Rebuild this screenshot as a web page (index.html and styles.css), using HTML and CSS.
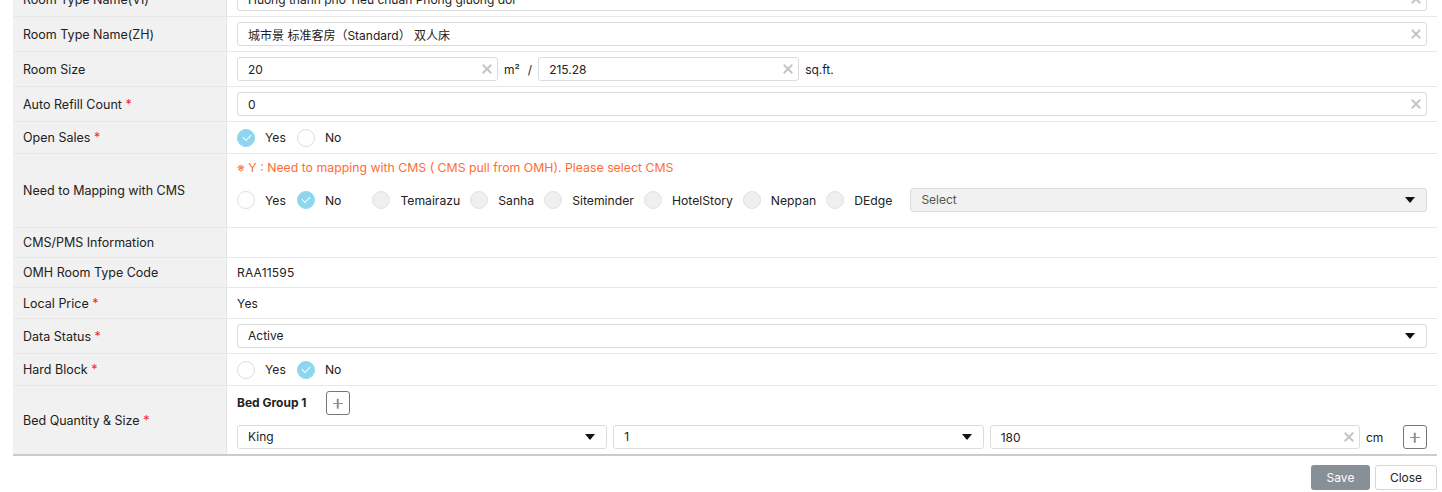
FILE: index.html
```html
<!DOCTYPE html>
<html lang="en">
<head>
    <meta charset="UTF-8">
    <title>Room Type Edit</title>
    <link rel="stylesheet" href="styles.css">
</head>
<body>
    <div class="form">
        <div class="row">
            <div class="label">Room Type Name(VI)</div>
            <div class="value">
                <div class="field"><input type="text" value="Hướng thành phố Tiêu chuẩn Phòng giường đôi"><span class="clear"></span></div>
            </div>
        </div>
        <div class="row">
            <div class="label">Room Type Name(ZH)</div>
            <div class="value">
                <div class="field"><input type="text" value="城市景 标准客房（Standard） 双人床"><span class="clear"></span></div>
            </div>
        </div>
        <div class="row">
            <div class="label">Room Size</div>
            <div class="value">
                <div class="field field-size"><input type="text" value="20"><span class="clear"></span></div>
                <span class="unit">m²</span>
                <span class="slash">/</span>
                <div class="field field-size"><input type="text" value="215.28"><span class="clear"></span></div>
                <span class="unit">sq.ft.</span>
            </div>
        </div>
        <div class="row">
            <div class="label">Auto Refill Count&nbsp;<span class="req">*</span></div>
            <div class="value">
                <div class="field"><input type="text" value="0"><span class="clear"></span></div>
            </div>
        </div>
        <div class="row row-radio">
            <div class="label">Open Sales&nbsp;<span class="req">*</span></div>
            <div class="value">
                <label class="radio-item"><span class="radio checked"></span>Yes</label>
                <label class="radio-item"><span class="radio"></span>No</label>
            </div>
        </div>
        <div class="row row-cms">
            <div class="label">Need to Mapping with CMS</div>
            <div class="value value-cms">
                <div class="note">※ Y : Need to mapping with CMS ( CMS pull from OMH). Please select CMS</div>
                <div class="cms-line">
                    <label class="radio-item"><span class="radio"></span>Yes</label>
                    <label class="radio-item"><span class="radio checked"></span>No</label>
                    <div class="cms-list">
                        <label class="radio-item"><span class="radio disabled"></span>Temairazu</label>
                        <label class="radio-item"><span class="radio disabled"></span>Sanha</label>
                        <label class="radio-item"><span class="radio disabled"></span>Siteminder</label>
                        <label class="radio-item"><span class="radio disabled"></span>HotelStory</label>
                        <label class="radio-item"><span class="radio disabled"></span>Neppan</label>
                        <label class="radio-item"><span class="radio disabled"></span>DEdge</label>
                    </div>
                    <div class="select select-disabled">Select<span class="arrow"></span></div>
                </div>
            </div>
        </div>
        <div class="row row-text">
            <div class="label">CMS/PMS Information</div>
            <div class="value"></div>
        </div>
        <div class="row row-text">
            <div class="label">OMH Room Type Code</div>
            <div class="value plain">RAA11595</div>
        </div>
        <div class="row row-text row-price">
            <div class="label">Local Price&nbsp;<span class="req">*</span></div>
            <div class="value plain">Yes</div>
        </div>
        <div class="row">
            <div class="label">Data Status&nbsp;<span class="req">*</span></div>
            <div class="value">
                <div class="select">Active<span class="arrow"></span></div>
            </div>
        </div>
        <div class="row row-radio">
            <div class="label">Hard Block&nbsp;<span class="req">*</span></div>
            <div class="value">
                <label class="radio-item"><span class="radio"></span>Yes</label>
                <label class="radio-item"><span class="radio checked"></span>No</label>
            </div>
        </div>
        <div class="row">
            <div class="label">Bed Quantity &amp; Size&nbsp;<span class="req">*</span></div>
            <div class="value value-bed">
                <div class="bed-head">
                    <span class="bed-title">Bed Group 1</span>
                    <button class="btn-plus"></button>
                </div>
                <div class="bed-line">
                    <div class="select">King<span class="arrow"></span></div>
                    <div class="select">1<span class="arrow"></span></div>
                    <div class="field"><input type="text" value="180"><span class="clear"></span></div>
                    <span class="unit">cm</span>
                    <button class="btn-plus"></button>
                </div>
            </div>
        </div>
    </div>

    <div class="footer">
        <button class="btn btn-save">Save</button>
        <button class="btn btn-close">Close</button>
    </div>
</body>
</html>
```

FILE: styles.css
```css
body {
    margin: 0;
    font-family: Inter, "Noto Sans", "Noto Sans CJK SC", sans-serif;
    color: #222;
    background: #fff;
}
.form {
    margin: -18px 5px 0 13px;
    border-bottom: 2px solid #cbcbcb;
}
.row {
    display: grid;
    grid-template-columns: 214px 1fr;
    height: 35px;
    box-sizing: border-box;
    border-bottom: 1px solid #e7e7e7;
}
.row:last-child {
    height: 68px;
    border-bottom: none;
}
.row-radio {
    height: 32px;
}
.row-cms {
    height: 74px;
}
.row-text {
    height: 30px;
}
.row-price {
    height: 31px;
}
.label {
    box-sizing: border-box;
    background: #f1f1f1;
    border-right: 1px solid #e4e4e4;
    padding: 0 10px;
    display: flex;
    align-items: center;
    font-size: 12.5px;
}
.req {
    color: #f0282d;
}
.value {
    display: flex;
    align-items: center;
    padding: 0 10px;
    min-width: 0;
}
.plain {
    font-size: 12px;
    letter-spacing: 0.2px;
}

/* text inputs */
.field {
    position: relative;
    flex: 1;
    height: 24px;
    min-width: 0;
}
.field input {
    box-sizing: border-box;
    width: 100%;
    height: 24px;
    border: 1px solid #dcdcdc;
    border-radius: 3px;
    padding: 0 28px 0 10px;
    font-family: inherit;
    font-size: 12px;
    color: #222;
    outline: none;
}
.clear {
    position: absolute;
    right: 6px;
    top: 7px;
    width: 10px;
    height: 10px;
}
.clear::before,
.clear::after {
    content: "";
    position: absolute;
    left: -1px;
    top: 4px;
    width: 12px;
    height: 2px;
    background: #c4c4c4;
    transform: rotate(45deg);
}
.clear::after {
    transform: rotate(-45deg);
}
.field-size {
    flex: none;
    width: 261px;
}
.unit {
    font-size: 12px;
    margin-left: 6px;
}
.slash {
    font-size: 12px;
    margin: 0 6px 0 8px;
}

/* selects */
.select {
    position: relative;
    flex: 1;
    box-sizing: border-box;
    height: 24px;
    border: 1px solid #dcdcdc;
    border-radius: 3px;
    padding: 0 10px;
    font-size: 12px;
    line-height: 22px;
    background: #fff;
}
.select-disabled {
    background: #f1f1f1;
    color: #555;
}
.arrow {
    position: absolute;
    right: 11px;
    top: 8px;
    border-left: 5px solid transparent;
    border-right: 5px solid transparent;
    border-top: 6px solid #111;
}

/* radios */
.radio-item {
    display: flex;
    align-items: center;
    font-size: 12.2px;
    margin-right: 11px;
}
.radio {
    box-sizing: border-box;
    width: 18px;
    height: 18px;
    border-radius: 50%;
    border: 1px solid #dedede;
    background: #fff;
    margin-right: 10px;
    position: relative;
}
.radio.checked {
    background: #8ed6ef;
    border-color: #8ed6ef;
}
.radio.checked::after {
    content: "";
    position: absolute;
    left: 4.5px;
    top: 4px;
    width: 7px;
    height: 4px;
    border-left: 1.5px solid #fff;
    border-bottom: 1.5px solid #fff;
    transform: rotate(-45deg);
}
.radio.disabled {
    background: #efefef;
    border-color: #e2e2e2;
}

/* cms row */
.value-cms {
    flex-direction: column;
    align-items: stretch;
    justify-content: flex-start;
    padding: 6px 10px 0;
}
.note {
    font-size: 12.3px;
    color: #ff6c35;
    line-height: 16px;
    margin-bottom: 12px;
}
.cms-line {
    display: flex;
    align-items: center;
    height: 24px;
}
.cms-list {
    display: flex;
    margin-left: 20px;
    margin-right: 8px;
}
.cms-list .radio-item {
    margin-right: 10px;
}

/* bed row */
.value-bed {
    flex-direction: column;
    align-items: stretch;
    justify-content: flex-start;
    padding: 5px 10px 0;
}
.bed-head {
    display: flex;
    align-items: center;
    margin-bottom: 10px;
}
.bed-title {
    font-size: 12px;
    font-weight: bold;
    width: 89px;
    margin-top: -2px;
}
.bed-line {
    display: grid;
    grid-template-columns: 1fr 1fr 1fr 31px 24px;
    align-items: center;
    gap: 6px;
}
.bed-line .unit {
    margin: 0;
}
.btn-plus {
    position: relative;
    box-sizing: border-box;
    width: 24px;
    height: 24px;
    border: 1px solid #777;
    border-radius: 3px;
    background: #fff;
    padding: 0;
    flex: none;
}
.btn-plus::before,
.btn-plus::after {
    content: "";
    position: absolute;
    left: 6px;
    top: 10.5px;
    width: 10px;
    height: 1.5px;
    background: #8a9096;
}
.btn-plus::after {
    transform: rotate(90deg);
}

/* footer */
.footer {
    display: flex;
    justify-content: flex-end;
    gap: 5px;
    padding: 9px 5px 0 0;
}
.btn {
    height: 25px;
    border-radius: 3px;
    font-family: inherit;
    font-size: 12px;
    padding: 0;
}
.btn-save {
    width: 59px;
    background: #878f97;
    border: none;
    color: #fff;
}
.btn-close {
    width: 62px;
    background: #fff;
    border: 1px solid #d6d6d6;
    color: #222;
}
```
